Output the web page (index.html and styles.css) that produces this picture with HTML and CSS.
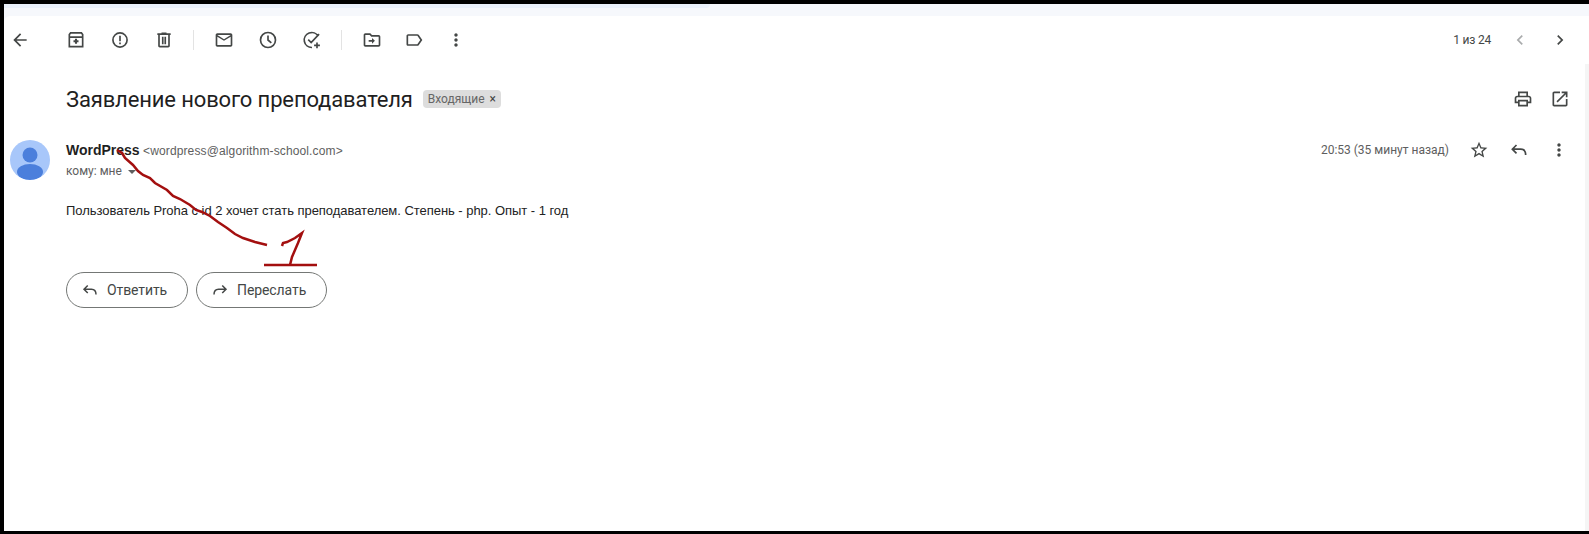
FILE: index.html
```html
<!DOCTYPE html>
<html lang="ru">
<head>
    <meta charset="UTF-8">
    <title>Заявление нового преподавателя</title>
    <link rel="stylesheet" href="styles.css">
</head>
<body>
    <div class="frame">
        <div class="strip"><div class="strip-fill"></div></div>
        <div class="main">
            <div class="toolbar">
                <div class="tool back"><svg viewBox="0 0 24 24"><path d="M20 11H7.830l5.590-5.590L12 4l-8 8 8 8 1.410-1.410L7.830 13H20v-2z"/></svg></div>
                <div class="tool-group first">
                    <div class="tool"><svg viewBox="0 0 24 24" class="line"><path d="M4 8.500h16M5.500 3.500h13L20 5.500V20H4V5.500z"/><path d="M12 10.500v6M9 13.500h6" class="thick"/></svg></div>
                    <div class="tool"><svg viewBox="0 0 24 24" class="line"><circle cx="12" cy="12" r="8.500"/><path d="M12 7v6.500M12 15v2"/></svg></div>
                    <div class="tool"><svg viewBox="0 0 24 24"><path d="M15 4V3H9v1H4v2h1v13c0 1.100.9 2 2 2h10c1.100 0 2-.9 2-2V6h1V4h-5zm2 15H7V6h10v13zM9.500 8h2v9h-2zm3 0h2v9h-2z"/></svg></div>
                </div>
                <div class="divider"></div>
                <div class="tool-group">
                    <div class="tool"><svg viewBox="0 0 24 24"><path d="M20 4H4c-1.100 0-2 .9-2 2v12c0 1.100.9 2 2 2h16c1.100 0 2-.9 2-2V6c0-1.100-.9-2-2-2zm0 14H4V8l8 5 8-5v10zm-8-7L4 6h16l-8 5z"/></svg></div>
                    <div class="tool"><svg viewBox="0 0 24 24" class="line"><circle cx="12" cy="12" r="9"/><path d="M12 6.500V12l4 3.500"/></svg></div>
                    <div class="tool"><svg viewBox="0 0 24 24" class="line"><path d="M19.500 7.500A9 9 0 1 0 12 21M7.500 11.500l3.500 3.500L20.500 5M18 15v7M14.500 18.500h7"/></svg></div>
                </div>
                <div class="divider"></div>
                <div class="tool-group last">
                    <div class="tool"><svg viewBox="0 0 24 24"><path d="M20 6h-8l-2-2H4c-1.100 0-2 .9-2 2v12c0 1.100.9 2 2 2h16c1.100 0 2-.9 2-2V8c0-1.100-.9-2-2-2zm0 12H4V6h5.170l2 2H20v10zM12 9.500l3.500 3.500-3.500 3.500v-2.500H8v-2h4V9.500z"/></svg></div>
                    <div class="tool"><svg viewBox="0 0 24 24"><path d="M17.630 5.840C17.270 5.330 16.670 5 16 5L5 5.010C3.900 5.010 3 5.900 3 7v10c0 1.100.9 1.990 2 1.990L16 19c.67 0 1.270-.33 1.630-.84L22 12l-4.370-6.160zM16 17H5V7h11l3.550 5L16 17z"/></svg></div>
                    <div class="tool"><svg viewBox="0 0 24 24"><path d="M12 8c1.100 0 2-.9 2-2s-.9-2-2-2-2 .9-2 2 .9 2 2 2zm0 2c-1.100 0-2 .9-2 2s.9 2 2 2 2-.9 2-2-.9-2-2-2zm0 6c-1.100 0-2 .9-2 2s.9 2 2 2 2-.9 2-2-.9-2-2-2z"/></svg></div>
                </div>
                <div class="pager">
                    <span class="pager-count">1 из 24</span>
                    <div class="tool muted"><svg viewBox="0 0 24 24"><path d="M15.410 7.410L14 6l-6 6 6 6 1.410-1.410L10.830 12z"/></svg></div>
                    <div class="tool"><svg viewBox="0 0 24 24"><path d="M10 6L8.590 7.410 13.170 12l-4.580 4.590L10 18l6-6z"/></svg></div>
                </div>
            </div>

            <div class="thread">
                <div class="subject-row">
                    <h2 class="subject">Заявление нового преподавателя</h2>
                    <span class="chip">Входящие <i>×</i></span>
                    <div class="subject-tools">
                        <div class="tool"><svg viewBox="0 0 24 24"><path d="M19 8h-1V3H6v5H5c-1.660 0-3 1.340-3 3v6h4v4h12v-4h4v-6c0-1.660-1.340-3-3-3zM8 5h8v3H8V5zm8 12v2H8v-4h8v2zm2-2v-2H6v2H4v-4c0-.55.45-1 1-1h14c.55 0 1 .45 1 1v4h-2z"/></svg></div>
                        <div class="tool"><svg viewBox="0 0 24 24"><path d="M19 19H5V5h7V3H5c-1.110 0-2 .9-2 2v14c0 1.100.89 2 2 2h14c1.100 0 2-.9 2-2v-7h-2v7zM14 3v2h3.590l-9.830 9.830 1.410 1.410L19 6.410V10h2V3h-7z"/></svg></div>
                    </div>
                </div>

                <div class="message">
                    <svg class="avatar" viewBox="0 0 40 40">
                        <defs><clipPath id="round"><circle cx="20" cy="20" r="20"/></clipPath></defs>
                        <g clip-path="url(#round)">
                            <rect width="40" height="40" fill="#a8c7fa"/>
                            <circle cx="20" cy="15" r="7.500" fill="#4b7fdc"/>
                            <ellipse cx="20" cy="32" rx="13" ry="8" fill="#4b7fdc"/>
                        </g>
                    </svg>
                    <div class="message-body">
                        <div class="message-head">
                            <div class="sender">
                                <b>WordPress</b> <span class="address">&lt;wordpress@algorithm-school.com&gt;</span>
                            </div>
                            <div class="message-tools">
                                <span class="time">20:53 (35 минут назад)</span>
                                <div class="tool"><svg viewBox="0 0 24 24"><path d="M22 9.240l-7.190-.62L12 2 9.190 8.630 2 9.240l5.460 4.730L5.820 21 12 17.270 18.180 21l-1.630-7.030L22 9.240zM12 15.400l-3.760 2.270 1-4.280-3.320-2.880 4.380-.38L12 6.100l1.710 4.040 4.380.38-3.320 2.880 1 4.280L12 15.400z"/></svg></div>
                                <div class="tool"><svg viewBox="0 0 24 24" class="line"><path d="M9 6l-5 5 5 5M4 11h10c3.500 0 6 2.500 6 7"/></svg></div>
                                <div class="tool"><svg viewBox="0 0 24 24"><path d="M12 8c1.100 0 2-.9 2-2s-.9-2-2-2-2 .9-2 2 .9 2 2 2zm0 2c-1.100 0-2 .9-2 2s.9 2 2 2 2-.9 2-2-.9-2-2-2zm0 6c-1.100 0-2 .9-2 2s.9 2 2 2 2-.9 2-2-.9-2-2-2z"/></svg></div>
                            </div>
                        </div>
                        <div class="recipient">кому: мне <span class="caret"></span></div>
                        <p class="text">Пользователь Proha с id 2 хочет стать преподавателем. Степень - php. Опыт - 1 год</p>
                        <div class="actions">
                            <div class="action"><svg viewBox="0 0 24 24" class="line"><path d="M9 6l-5 5 5 5M4 11h10c3.500 0 6 2.500 6 7"/></svg>Ответить</div>
                            <div class="action"><svg viewBox="0 0 24 24" class="line"><path d="M15 6l5 5-5 5M20 11H10c-3.500 0-6 2.500-6 7"/></svg>Переслать</div>
                        </div>
                    </div>
                </div>
            </div>
        </div>

        <svg class="scribble" viewBox="0 0 1589 534">
            <polyline points="117,150 122,153 125,158 133,165 138,171 143,175 150,178 155,183 167,190 173,196 180,199 190,205 196,210 202,212 210,216 218,222 227,228 235,234 243,238 255,242 267,245"/>
            <polyline points="282,246 283,243 287,242 295,238 302,233 298,243 295,250 292,257 290,265"/>
            <polyline points="264,265 317,265"/>
        </svg>
    </div>
</body>
</html>
```

FILE: styles.css
```css
* {
    margin: 0;
    padding: 0;
    box-sizing: border-box;
}

html, body {
    height: 100%;
}

body {
    font-family: Roboto, "Liberation Sans", sans-serif;
    color: #202124;
    background: #fff;
    overflow: hidden;
}

.frame {
    position: relative;
    height: 534px;
    display: flex;
    flex-direction: column;
    background: #f6f8fc;
    border-top: 4px solid #000;
    border-left: 4px solid #000;
    border-bottom: 3px solid #000;
}

.strip {
    height: 12px;
    flex: none;
}

.strip-fill {
    width: 706px;
    height: 4px;
    background: #eaf1fb;
    border-bottom-right-radius: 4px;
}

.main {
    flex: 1;
    display: flex;
    flex-direction: column;
    background: #fff;
    border-top-left-radius: 6px;
}

.toolbar {
    height: 48px;
    flex: none;
    display: flex;
    align-items: center;
}

.tool {
    width: 44px;
    height: 40px;
    flex: none;
    display: flex;
    align-items: center;
    justify-content: center;
}

.tool svg {
    width: 20px;
    height: 20px;
    fill: #444746;
}

.tool svg.line,
.action svg.line {
    fill: none;
    stroke: #444746;
    stroke-width: 2;
}

.tool svg .thick {
    stroke-width: 2.500;
}

.tool.muted svg {
    fill: #a9abac;
}

.back {
    width: 32px;
}

.tool-group {
    display: flex;
}

.tool-group.first {
    margin-left: 18px;
}

.tool-group.last {
    margin-left: 1px;
}

.tool-group.last .tool {
    width: 42px;
}

.divider {
    width: 1px;
    height: 20px;
    margin: 0 8px 0 7px;
    background: #e3e3e3;
}

.pager {
    margin-left: auto;
    display: flex;
    align-items: center;
}

.pager-count {
    font-size: 12px;
    letter-spacing: -.2px;
    color: #444746;
    margin-right: 9px;
}

.pager .tool {
    width: 40px;
}

.pager .tool:last-child {
    margin-right: 9px;
}

.thread {
    flex: 1;
    border-right: 4px solid #f5f5f5;
}

.subject-row {
    display: flex;
    align-items: center;
    height: 44px;
    margin-top: 13px;
    padding-left: 62px;
}

.subject {
    font-size: 22px;
    font-weight: 400;
    letter-spacing: -.14px;
    color: #1f1f1f;
}

.chip {
    margin-left: 10px;
    height: 18px;
    padding: 0 5px;
    background: #dddddd;
    border-radius: 4px;
    font-size: 12px;
    line-height: 18px;
    color: #666;
    white-space: nowrap;
}

.chip i {
    font-style: normal;
    margin-left: 2px;
    color: #444;
}

.subject-tools {
    margin-left: auto;
    display: flex;
    margin-right: 7px;
}

.subject-tools .tool {
    width: 37px;
}

.message {
    display: flex;
    margin-top: 19px;
    padding-left: 6px;
}

.avatar {
    width: 40px;
    height: 40px;
    flex: none;
}

.message-body {
    flex: 1;
    margin-left: 16px;
    margin-right: 6px;
}

.message-head {
    display: flex;
    align-items: center;
    justify-content: space-between;
    height: 20px;
}

.sender {
    font-family: "Liberation Sans", sans-serif;
    font-size: 12px;
    color: #5e5e5e;
}

.sender b {
    font-size: 14px;
    color: #1f1f1f;
}

.address {
    letter-spacing: .13px;
}

.message-tools {
    display: flex;
    align-items: center;
}

.time {
    font-size: 12px;
    color: #5e5e5e;
    margin-right: 10px;
}

.message-tools .tool {
    width: 40px;
}

.recipient {
    margin-top: 2px;
    font-size: 12px;
    line-height: 18px;
    color: #5e5e5e;
}

.caret {
    display: inline-block;
    margin-left: 3px;
    vertical-align: middle;
    border-top: 4px solid #5e5e5e;
    border-left: 4px solid transparent;
    border-right: 4px solid transparent;
}

.text {
    margin-top: 23px;
    font-family: "Liberation Sans", sans-serif;
    font-size: 13px;
    line-height: 16px;
    letter-spacing: -.04px;
    color: #222;
}

.actions {
    display: flex;
    gap: 8px;
    margin-top: 53px;
}

.action {
    height: 36px;
    display: flex;
    align-items: center;
    gap: 8px;
    padding: 0 20px 0 14px;
    border: 1px solid #747775;
    border-radius: 18px;
    font-size: 14px;
    letter-spacing: -.1px;
    color: #444746;
}

.action svg {
    width: 18px;
    height: 18px;
}

.scribble {
    position: absolute;
    left: -4px;
    top: -4px;
    width: 1589px;
    height: 534px;
    pointer-events: none;
}

.scribble polyline {
    fill: none;
    stroke: #a30f0f;
    stroke-width: 2.500;
}
```
